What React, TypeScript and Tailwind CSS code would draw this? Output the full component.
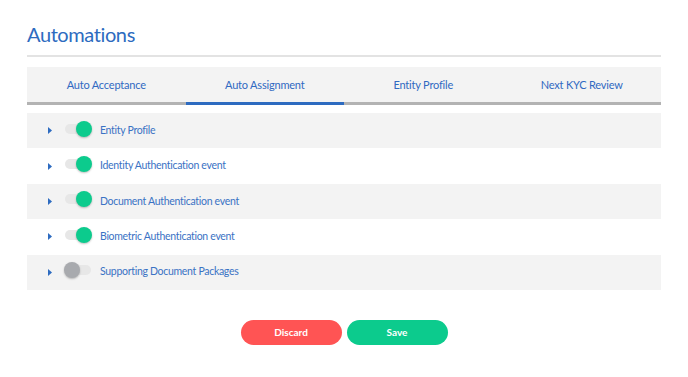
import { useState } from "react";

const tabs = ["Auto Acceptance", "Auto Assignment", "Entity Profile", "Next KYC Review"];

const initialRows = [
  { label: "Entity Profile", on: true },
  { label: "Identity Authentication event", on: true },
  { label: "Document Authentication event", on: true },
  { label: "Biometric Authentication event", on: true },
  { label: "Supporting Document Packages", on: false },
];

function Toggle({ on, onClick }: { on: boolean; onClick: () => void }) {
  return (
    <button
      type="button"
      onClick={onClick}
      className="relative h-4 w-[28px] shrink-0"
    >
      <span className="absolute left-[1px] right-[1px] top-[3px] h-[10px] rounded-full bg-[#e7e7e7]" />
      <span
        className={
          on
            ? "absolute left-[12px] top-0 h-4 w-4 rounded-full bg-[#0ccb8d] shadow-[0_1px_2px_rgba(0,0,0,0.25)]"
            : "absolute left-0 top-0 h-4 w-4 rounded-full bg-[#a8aaae] shadow-[0_1px_2px_rgba(0,0,0,0.25)]"
        }
      />
    </button>
  );
}

export default function App() {
  const [active, setActive] = useState(1);
  const [rows, setRows] = useState(initialRows);

  const toggle = (i: number) =>
    setRows((r) => r.map((row, j) => (j === i ? { ...row, on: !row.on } : row)));

  return (
    <div className="min-h-[377px] bg-white px-[27px] pt-[21px] font-['Lato',sans-serif] text-[#3069c2]">
      <h1 className="text-[20px] leading-[26px] tracking-[-0.4px] text-[#2d6bc0]">Automations</h1>
      <div className="mt-[8px] h-[2px] bg-[#e3e3e3]" />

      <div className="mt-[10px] grid grid-cols-4 bg-[#f3f3f3]">
        {tabs.map((t, i) => (
          <button
            key={t}
            type="button"
            onClick={() => setActive(i)}
            className={
              i === active
                ? "h-[38px] border-b-[3px] border-[#2d6bc0] pt-[2px] text-[11px] tracking-[-0.2px] text-[#3069c2]"
                : "h-[38px] border-b-[3px] border-[#b3b3b3] pt-[2px] text-[11px] tracking-[-0.2px] text-[#3069c2]"
            }
          >
            {t}
          </button>
        ))}
      </div>

      <div className="mt-[8px]">
        {rows.map((row, i) => (
          <div
            key={row.label}
            className={
              i % 2 === 0
                ? "flex h-[35.4px] items-center bg-[#f3f3f3]"
                : "flex h-[35.4px] items-center bg-white"
            }
          >
            <svg width="4" height="7" viewBox="0 0 4 7" className="ml-[21px]">
              <path d="M0 0 L4 3.5 L0 7 Z" fill="#2d6bc0" />
            </svg>
            <div className="ml-[12px]">
              <Toggle on={row.on} onClick={() => toggle(i)} />
            </div>
            <span className="ml-[8px] text-[10.5px] tracking-[-0.3px] text-[#3a72c4]">{row.label}</span>
          </div>
        ))}
      </div>

      <div className="mt-[30px] flex justify-center gap-[5px]">
        <button
          type="button"
          className="h-[25px] w-[101px] rounded-full bg-[#ff5454] text-[10px] font-bold text-white"
        >
          Discard
        </button>
        <button
          type="button"
          className="h-[25px] w-[101px] rounded-full bg-[#0ccb8d] text-[10px] font-bold text-white"
        >
          Save
        </button>
      </div>
    </div>
  );
}
